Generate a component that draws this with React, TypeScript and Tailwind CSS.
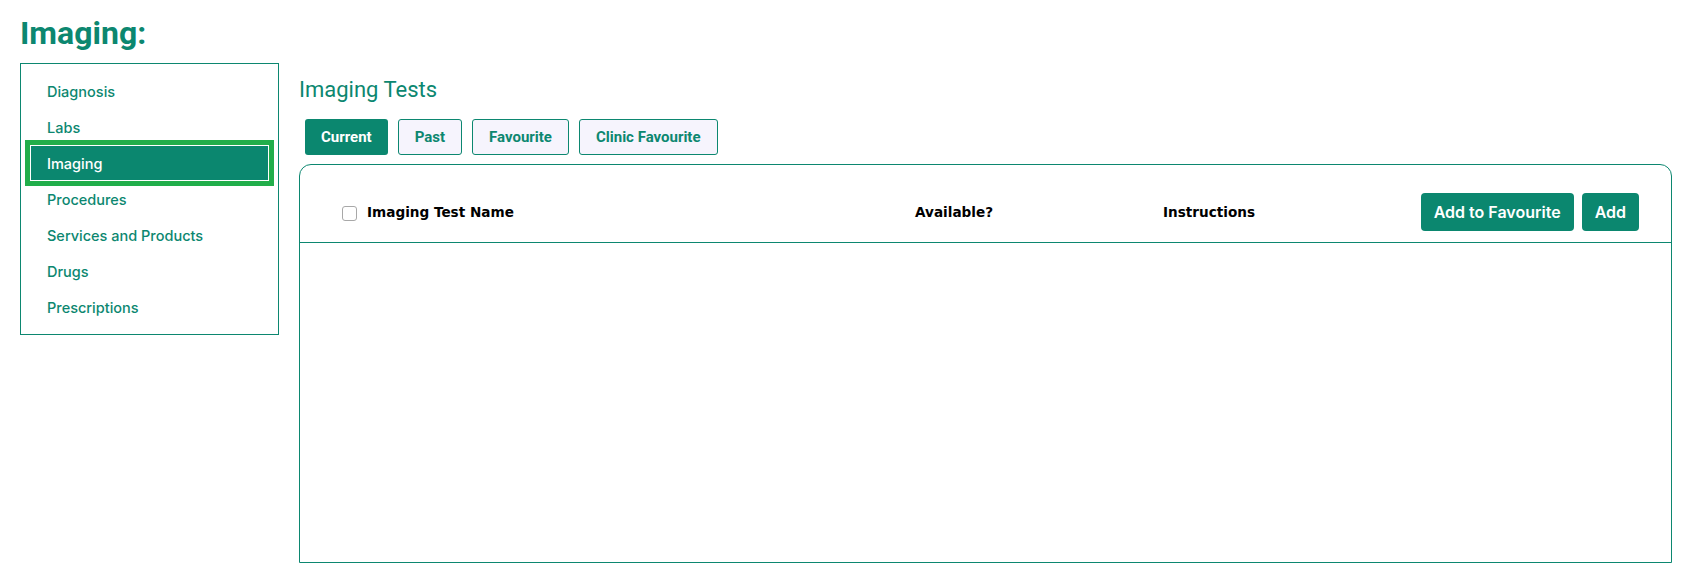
import React from 'react';

const teal = 'text-[#0c8770]';

const SideNav = () => {
  const items = ['Diagnosis', 'Labs', 'Imaging', 'Procedures', 'Services and Products', 'Drugs', 'Prescriptions'];
  const active = 'Imaging';

  return (
    <nav className="w-[259px] shrink-0 self-start border border-[#0c8770] p-[9px]">
      <ul className="flex flex-col">
        {items.map((item) => (
          <li key={item}>
            {item === active ? (
              <div className="flex h-[36px] items-center border border-white bg-[#0b876f] pl-[16px] pt-[2px] text-[14.5px] font-medium text-white outline outline-[5px] outline-[#21ae4a]">
                {item}
              </div>
            ) : (
              <div className={`flex h-[36px] items-center pl-[17px] pt-[2px] text-[14.5px] font-medium ${teal}`}>{item}</div>
            )}
          </li>
        ))}
      </ul>
    </nav>
  );
};

const Tabs = () => {
  const tabs = ['Current', 'Past', 'Favourite', 'Clinic Favourite'];
  return (
    <div className="ml-[6px] flex gap-[10px]">
      {tabs.map((tab, i) =>
        i === 0 ? (
          <button key={tab} className="h-[36px] rounded-[3px] bg-[#0b876f] px-4 font-['Roboto'] text-[15px] font-bold text-white">
            {tab}
          </button>
        ) : (
          <button
            key={tab}
            className={`h-[36px] rounded-[3px] border border-[#0c8770] bg-[#f6f4fd] px-4 font-['Roboto'] text-[15px] font-bold ${teal}`}
          >
            {tab}
          </button>
        )
      )}
    </div>
  );
};

const headCell = "font-['DejaVu_Sans'] text-[13.6px] font-bold text-black";

const TestsTable = () => (
  <div className="mt-[9px] h-[399px] rounded-t-xl border border-[#0c8770]">
    <div className="flex items-center border-b border-[#0c8770] pt-[28px] pb-[11px] pl-[42px] pr-[32px]">
      <div className="flex w-[573px] items-center gap-[10px]">
        <span className="mt-[3px] h-[15px] w-[15px] rounded-[3px] border border-[#a8a8a8] bg-white" />
        <span className={headCell}>Imaging Test Name</span>
      </div>
      <div className={`w-[248px] ${headCell}`}>Available?</div>
      <div className={`flex-1 ${headCell}`}>Instructions</div>
      <div className="flex gap-[8px]">
        <button className="h-[38px] rounded-[4px] bg-[#0b876f] px-[13px] font-['Inter'] text-[16px] font-semibold text-white">
          Add to Favourite
        </button>
        <button className="h-[38px] rounded-[4px] bg-[#0b876f] px-[13px] font-['Inter'] text-[16px] font-semibold text-white">
          Add
        </button>
      </div>
    </div>
  </div>
);

export default function App() {
  return (
    <div className="min-h-[574px] bg-white pl-[20px] pr-[10px] pt-[14px] font-['Inter',sans-serif]">
      <h1 className={`font-['Roboto'] text-[32px] leading-[38px] font-bold ${teal}`}>Imaging:</h1>
      <div className="mt-[11px] flex gap-[20px]">
        <SideNav />
        <main className="flex-1">
          <h2 className={`mt-[13px] font-['Roboto'] text-[22px] leading-[28px] ${teal}`}>Imaging Tests</h2>
          <div className="mt-[15px]">
            <Tabs />
          </div>
          <TestsTable />
        </main>
      </div>
    </div>
  );
}
